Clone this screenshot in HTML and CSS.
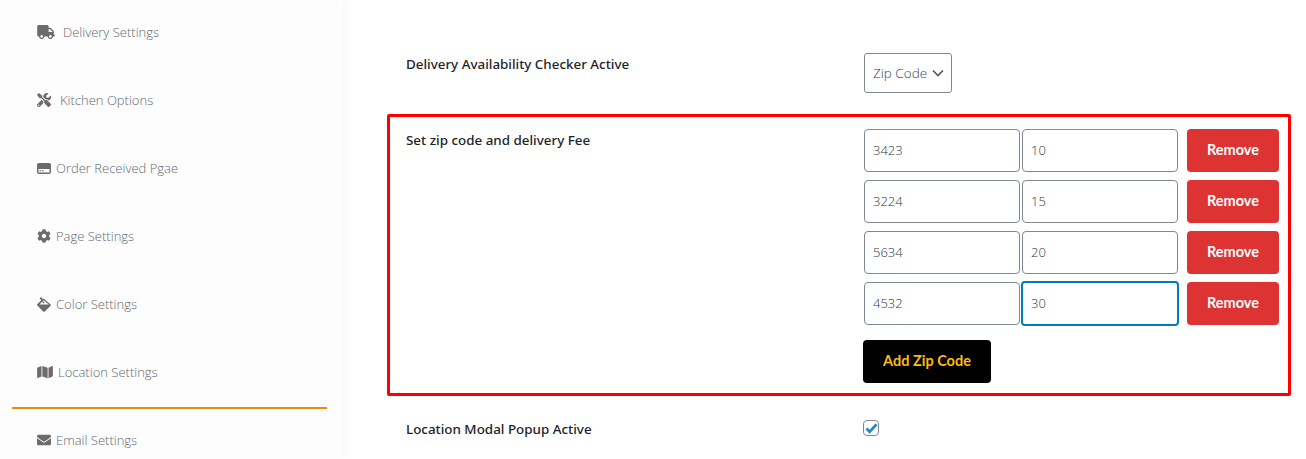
FILE: index.html
```html
<!DOCTYPE html>
<html lang="en">
<head>
  <meta charset="UTF-8" />
  <title>Delivery Settings</title>
  <link rel="stylesheet" href="styles.css">
</head>
<body>
  <div class="page">
    <aside class="sidebar">
      <ul class="side-menu">
        <li class="side-item">
          <svg class="side-icon" viewBox="0 0 640 512" width="18" height="14"><path d="M624 352h-16V243.9c0-12.7-5.1-24.9-14.1-33.9L494 110.1c-9-9-21.2-14.1-33.9-14.1H416V48c0-26.5-21.5-48-48-48H48C21.5 0 0 21.5 0 48v320c0 26.5 21.5 48 48 48h16c0 53 43 96 96 96s96-43 96-96h128c0 53 43 96 96 96s96-43 96-96h48c8.8 0 16-7.2 16-16v-32c0-8.8-7.2-16-16-16zM160 464c-26.5 0-48-21.5-48-48s21.5-48 48-48 48 21.5 48 48-21.5 48-48 48zm320 0c-26.5 0-48-21.5-48-48s21.5-48 48-48 48 21.5 48 48-21.5 48-48 48zm80-208H416V144h44.1l99.9 99.9V256z"/></svg>
          <span class="side-label truck-label">Delivery Settings</span>
        </li>
        <li class="side-item">
          <svg class="side-icon" viewBox="0 0 512 512" width="14" height="14"><path d="M501.1 395.7L384 278.6c-23.1-23.1-57.6-27.6-85.4-13.9L192 158.1V96L64 0 0 64l96 128h62.1l106.6 106.6c-13.6 27.8-9.2 62.3 13.9 85.4l117.1 117.1c14.6 14.6 38.2 14.6 52.7 0l52.7-52.7c14.5-14.6 14.5-38.2 0-52.7zM331.700 225c28.300 0 54.900 11 74.900 31l19.400 19.400c15.800-6.900 30.800-16.500 43.800-29.500 37.100-37.100 49.700-89.300 37.900-136.700-2.200-9-13.500-12.100-20.100-5.500l-74.400 74.400-67.900-11.300L334 98.900l74.400-74.400c6.600-6.600 3.400-17.900-5.700-20.200-47.400-11.700-99.600.9-136.600 37.900-28.500 28.500-41.900 66.100-41.200 103.600l82.100 82.100c8.100-1.900 16.500-2.900 24.700-2.900zm-103.900 82l-56.700-56.700L18.700 402.800c-25 25-25 65.500 0 90.500s65.500 25 90.500 0l123.600-123.600c-7.600-19.900-9.900-41.600-5-62.700zM64 472c-13.200 0-24-10.800-24-24 0-13.300 10.700-24 24-24s24 10.700 24 24c0 13.200-10.700 24-24 24z"/></svg>
          <span class="side-label tools-label">Kitchen Options</span>
        </li>
        <li class="side-item">
          <svg class="side-icon" viewBox="0 0 14 11" width="14" height="11"><path fill-rule="evenodd" d="M2 0h10a2 2 0 0 1 2 2v7a2 2 0 0 1-2 2H2a2 2 0 0 1-2-2V2a2 2 0 0 1 2-2zM1.500 6v3.500h11V6zM2.500 7.200h1.700v1.100H2.500zM5 7.200h1.700v1.100H5z"/></svg>
          <span class="side-label">Order Received Pgae</span>
        </li>
        <li class="side-item">
          <svg class="side-icon" viewBox="0 0 512 512" width="14" height="14"><path d="M487.4 315.7l-42.6-24.6c4.3-23.2 4.3-47 0-70.2l42.6-24.6c4.9-2.8 7.1-8.6 5.5-14-11.1-35.6-30-67.8-54.7-94.6-3.8-4.1-10-5.1-14.8-2.3L380.8 110c-17.9-15.4-38.5-27.3-60.8-35.1V25.8c0-5.6-3.9-10.5-9.4-11.7-36.7-8.2-74.3-7.8-109.2 0-5.5 1.2-9.4 6.1-9.4 11.7V75c-22.2 7.9-42.8 19.8-60.8 35.1L88.7 85.500c-4.9-2.800-11-1.900-14.800 2.300-24.700 26.700-43.600 58.900-54.700 94.600-1.700 5.400.6 11.200 5.500 14L67.300 221c-4.300 23.200-4.300 47 0 70.200l-42.600 24.600c-4.900 2.800-7.100 8.600-5.500 14 11.100 35.600 30 67.800 54.700 94.600 3.800 4.100 10 5.100 14.800 2.300l42.600-24.600c17.900 15.400 38.500 27.300 60.800 35.100v49.200c0 5.600 3.900 10.500 9.400 11.700 36.700 8.200 74.300 7.800 109.200 0 5.500-1.200 9.400-6.100 9.400-11.700v-49.200c22.200-7.900 42.800-19.800 60.800-35.100l42.600 24.600c4.900 2.800 11 1.900 14.800-2.300 24.700-26.700 43.600-58.900 54.700-94.600 1.500-5.500-.7-11.300-5.600-14.100zM256 336c-44.100 0-80-35.900-80-80s35.900-80 80-80 80 35.900 80 80-35.900 80-80 80z"/></svg>
          <span class="side-label">Page Settings</span>
        </li>
        <li class="side-item">
          <svg class="side-icon" viewBox="0 0 14 15" width="14" height="15"><path fill-rule="evenodd" d="M3.900 0 5.800 2.100 6.500 1.400l7.100 6a.9.9 0 0 1 0 1.300l-5.800 5.700a1.100 1.100 0 0 1-1.600 0L.4 8.600a1 1 0 0 1 0-1.500L4.300 3.300 2.600 1.200zM5.400 4.400 2.500 7.400h9.300L6.600 3.200 5.900 3.900 6.700 4.800a.8.8 0 1 1-.9.500z"/></svg>
          <span class="side-label">Color Settings</span>
        </li>
        <li class="side-item active">
          <svg class="side-icon" viewBox="0 0 576 512" width="16" height="14"><path d="M0 117.660v346.320c0 11.320 11.430 19.060 21.940 14.860L160 416V32L20.120 87.950A32.006 32.006 0 0 0 0 117.660zM192 416l192 64V96L192 32v384zM554.060 33.160L416 96v384l139.880-55.950A31.996 31.996 0 0 0 576 394.340V48.020c0-11.320-11.430-19.060-21.940-14.860z"/></svg>
          <span class="side-label">Location Settings</span>
        </li>
        <li class="side-item">
          <svg class="side-icon" viewBox="0 0 512 512" width="14" height="14"><path d="M502.300 190.800c3.900-3.100 9.700-.2 9.700 4.700V400c0 26.500-21.500 48-48 48H48c-26.500 0-48-21.500-48-48V195.600c0-5 5.700-7.800 9.700-4.700 22.400 17.400 52.100 39.500 154.100 113.600 21.100 15.400 56.700 47.800 92.200 47.600 35.700.3 72-32.800 92.300-47.600 102-74.100 131.600-96.300 154-113.700zM256 320c23.200.4 56.600-29.200 73.400-41.400 132.700-96.300 142.800-104.700 173.400-128.700 5.800-4.500 9.200-11.500 9.200-18.900v-19c0-26.500-21.500-48-48-48H48C21.500 64 0 85.500 0 112v19c0 7.400 3.400 14.300 9.200 18.900 30.600 23.900 40.700 32.400 173.400 128.700 16.800 12.200 50.200 41.800 73.400 41.400z"/></svg>
          <span class="side-label">Email Settings</span>
        </li>
      </ul>
    </aside>

    <main class="content">
      <div class="field-row first-row">
        <div class="field-label">Delivery Availability Checker Active</div>
        <div class="field-control">
          <div class="select-box">Zip Code
            <svg viewBox="0 0 12 8" width="12" height="8"><path d="M1 1.500 6 6.500l5-5" fill="none" stroke="#50575e" stroke-width="1.600"/></svg>
          </div>
        </div>
      </div>

      <div class="field-row zip-row">
        <div class="field-label">Set zip code and delivery Fee</div>
        <div class="field-control">
          <div class="zip-line">
            <input class="text-input" type="text" value="3423">
            <input class="text-input" type="text" value="10">
            <button class="remove-btn">Remove</button>
          </div>
          <div class="zip-line">
            <input class="text-input" type="text" value="3224">
            <input class="text-input" type="text" value="15">
            <button class="remove-btn">Remove</button>
          </div>
          <div class="zip-line">
            <input class="text-input" type="text" value="5634">
            <input class="text-input" type="text" value="20">
            <button class="remove-btn">Remove</button>
          </div>
          <div class="zip-line">
            <input class="text-input" type="text" value="4532">
            <input class="text-input focused" type="text" value="30">
            <button class="remove-btn">Remove</button>
          </div>
          <button class="add-btn">Add Zip Code</button>
        </div>
      </div>

      <div class="field-row last-row">
        <div class="field-label">Location Modal Popup Active</div>
        <div class="field-control">
          <span class="check-box">
            <svg viewBox="0 0 14 12" width="13" height="11"><path d="M1.500 6 5 9.500 12.500 1.500" fill="none" stroke="#1e8cbe" stroke-width="3"/></svg>
          </span>
        </div>
      </div>
    </main>
  </div>
</body>
</html>
```

FILE: styles.css
```css
html, body {
  margin: 0;
  height: 100%;
  overflow: hidden;
}

body {
  font-family: 'Open Sans', sans-serif;
  background-color: #fff;
}

.page {
  display: flex;
  height: 459px;
}

/* Sidebar */
.sidebar {
  width: 342px;
  flex-shrink: 0;
  box-sizing: border-box;
  padding: 1px 15px 0 12px;
  background-color: #fdfdfd;
  box-shadow: 5px 0 12px rgba(0,0,0,0.03);
}

.side-menu {
  list-style: none;
  margin: 0;
  padding: 0;
}

.side-item {
  display: flex;
  align-items: center;
  gap: 5px;
  height: 68px;
  box-sizing: border-box;
  padding: 0 0 4px 25px;
  border-bottom: 2px solid transparent;
  font-size: 13px;
  font-weight: 300;
  color: #64696e;
}

.side-item.active {
  border-bottom-color: #f08c00;
}

.side-icon {
  fill: #6b6b6b;
  flex-shrink: 0;
}

.truck-label {
  margin-left: 3px;
}

.tools-label {
  margin-left: 4px;
}

/* Main form */
.content {
  flex: 1;
  padding-left: 45px;
  padding-right: 15px;
}

.field-row {
  display: flex;
}

.field-label {
  width: 477px;
  flex-shrink: 0;
  box-sizing: border-box;
  padding-left: 19px;
  font-family: 'Noto Sans', sans-serif;
  font-size: 13.4px;
  font-weight: 500;
  line-height: 20px;
  color: #1d2327;
}

.first-row {
  padding-top: 53px;
  height: 114px;
  box-sizing: border-box;
}

.first-row .field-label {
  padding-top: 1px;
}

.select-box {
  display: inline-flex;
  align-items: center;
  gap: 5px;
  height: 40px;
  width: 88px;
  box-sizing: border-box;
  padding-left: 8px;
  border: 1px solid #7e8993;
  border-radius: 3px;
  font-size: 13.5px;
  font-weight: 300;
  color: #3c434a;
}

.zip-row {
  height: 282px;
  box-sizing: border-box;
  padding-top: 12px;
  border: 3px solid #f00;
  border-radius: 2px;
}

.zip-row .field-label {
  padding-left: 16px;
  padding-top: 1px;
  width: 474px;
}

.zip-line {
  display: flex;
  gap: 2px;
  height: 43px;
  margin-bottom: 8px;
}

.text-input {
  width: 156px;
  height: 43px;
  box-sizing: border-box;
  padding: 0 8px 2px;
  border: 1px solid #7e8993;
  border-radius: 4px;
  font-family: 'Open Sans', sans-serif;
  font-size: 13px;
  font-weight: 300;
  color: #32373c;
  outline: none;
}

.text-input.focused {
  border: 2px solid #007cba;
  width: 158px;
  height: 45px;
  margin: -1px;
  padding: 0 8px 2px;
}

.remove-btn {
  width: 92px;
  height: 43px;
  margin-left: 7px;
  padding: 0 0 2px;
  border: none;
  border-radius: 4px;
  background-color: #dd3333;
  color: #fff;
  font-family: 'Lato', sans-serif;
  font-size: 14.5px;
  font-weight: 700;
}

.add-btn {
  display: block;
  width: 128px;
  height: 43px;
  margin: 15px 0 0 -1px;
  padding: 0 0 2px;
  border: none;
  border-radius: 4px;
  background-color: #000;
  color: #fdbb10;
  font-family: 'Lato', sans-serif;
  font-size: 14.5px;
  font-weight: 700;
}

.last-row {
  padding-top: 23px;
}

.check-box {
  display: flex;
  align-items: center;
  justify-content: center;
  width: 16px;
  height: 16px;
  box-sizing: border-box;
  margin: 1px 0 0 -1px;
  border: 1px solid #7e8993;
  border-radius: 4px;
}
```
